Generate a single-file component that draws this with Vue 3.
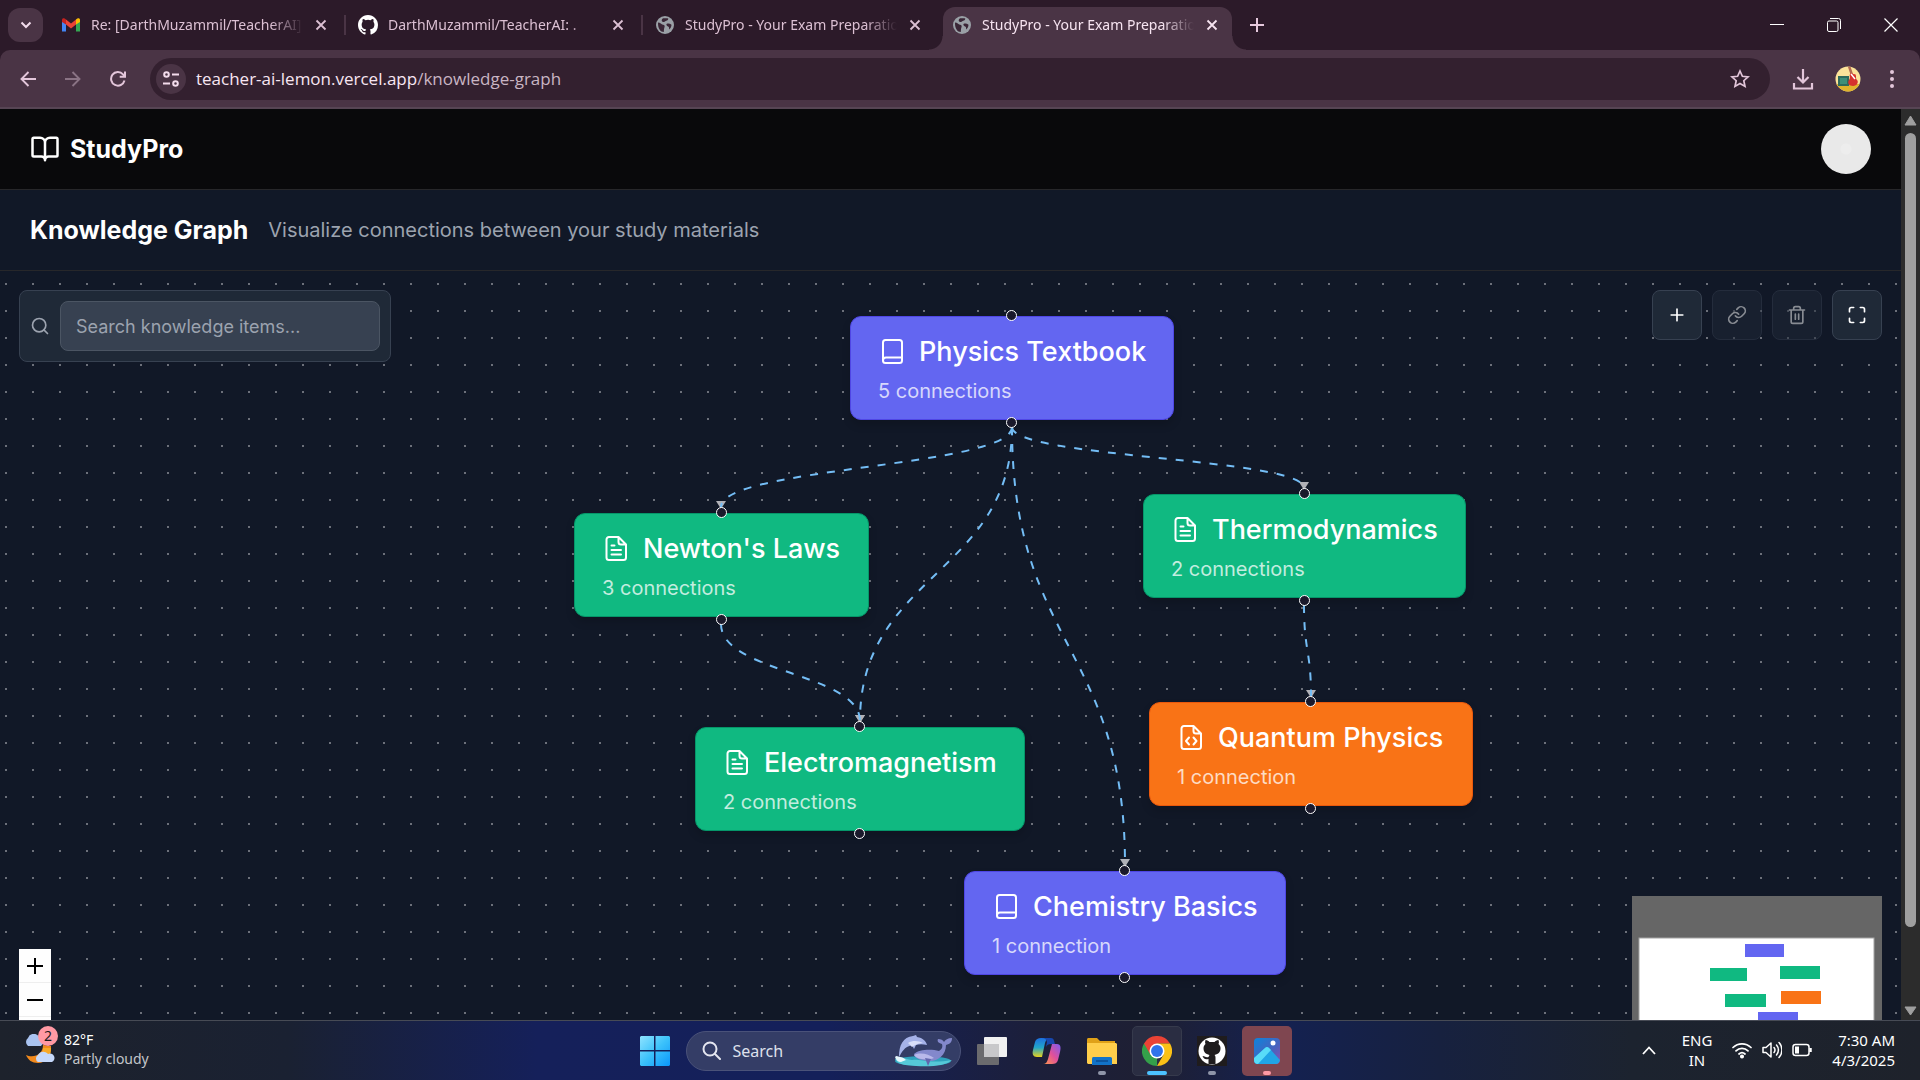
<script setup>
import { ref } from 'vue'

const query = ref('')

const tabs = [
  { title: 'Re: [DarthMuzammil/TeacherAI]', icon: 'gmail' },
  { title: 'DarthMuzammil/TeacherAI: .', icon: 'github' },
  { title: 'StudyPro - Your Exam Preparatio', icon: 'globe' },
  { title: 'StudyPro - Your Exam Preparatio', icon: 'globe', active: true },
]

const nodes = [
  { id: 'physics', title: 'Physics Textbook', count: '5 connections', icon: 'book', kind: 'subject', x: 850, y: 45, w: 324 },
  { id: 'newton', title: "Newton's Laws", count: '3 connections', icon: 'text', kind: 'topic', x: 574, y: 242, w: 295 },
  { id: 'thermo', title: 'Thermodynamics', count: '2 connections', icon: 'text', kind: 'topic', x: 1143, y: 223, w: 323 },
  { id: 'electro', title: 'Electromagnetism', count: '2 connections', icon: 'text', kind: 'topic', x: 695, y: 456, w: 330 },
  { id: 'quantum', title: 'Quantum Physics', count: '1 connection', icon: 'code', kind: 'note', x: 1149, y: 431, w: 324 },
  { id: 'chem', title: 'Chemistry Basics', count: '1 connection', icon: 'book', kind: 'subject', x: 964, y: 600, w: 322 },
]

const links = [
  ['physics', 'newton'],
  ['physics', 'thermo'],
  ['physics', 'electro'],
  ['physics', 'chem'],
  ['newton', 'electro'],
  ['thermo', 'quantum'],
]

const NODE_H = 104
const find = (id) => nodes.find((n) => n.id === id)
const edges = links.map(([a, b]) => {
  const s = find(a)
  const t = find(b)
  const sx = Math.floor(s.x + s.w / 2)
  const sy = s.y + NODE_H + 7
  const tx = Math.floor(t.x + t.w / 2)
  const ty = t.y - 6
  const my = Math.round((sy + ty) / 2)
  return {
    id: a + '-' + b,
    d: `M${sx},${sy} C${sx},${my} ${tx},${my} ${tx},${ty}`,
    arrow: `${tx - 5},${ty - 6} ${tx + 5},${ty - 6} ${tx},${ty + 2}`,
  }
})

const miniNodes = [
  { x: 113, y: 48, w: 39, kind: 'subject' },
  { x: 78, y: 72, w: 37, kind: 'topic' },
  { x: 148, y: 70, w: 40, kind: 'topic' },
  { x: 93, y: 98, w: 41, kind: 'topic' },
  { x: 149, y: 95, w: 40, kind: 'note' },
  { x: 126, y: 116, w: 40, kind: 'subject' },
]
const fills = { subject: '#6366f1', topic: '#10b981', note: '#f97316' }
</script>

<template>
  <div class="screen">
    <header class="browser">
      <div class="tabstrip">
        <button class="tab-search" aria-label="Search tabs">
          <svg width="12" height="8" viewBox="0 0 12 8"><path d="M1.500 1.500 6 6l4.500-4.500" fill="none" stroke="#f3dcec" stroke-width="2" /></svg>
        </button>
        <div class="tabs">
          <div v-for="(tab, i) in tabs" :key="i" class="tab" :class="{ active: tab.active, ruled: i < 2 }">
            <svg v-if="tab.icon === 'gmail'" width="20" height="20" viewBox="0 0 20 20">
              <path d="M1 5v11.500h4V9z" fill="#4285f4" />
              <path d="M19 5v11.500h-4V9z" fill="#34a853" />
              <path d="M15 4.500V9.500L19 7V5c0-2-2.200-2.500-4-.5z" fill="#fbbc04" />
              <path d="M5 4.500V9.500L1 7V5c0-2 2.200-2.500 4-.5z" fill="#c5221f" />
              <path d="M5 4.500 10 8.500l5-4v5l-5 4-5-4z" fill="#ea4335" />
            </svg>
            <svg v-else-if="tab.icon === 'github'" width="20" height="20" viewBox="0 0 16 16"><path fill="#fff" d="M8 0C3.580 0 0 3.580 0 8c0 3.540 2.290 6.530 5.470 7.590.4.070.55-.17.55-.38 0-.19-.01-.82-.01-1.490-2.010.37-2.530-.49-2.690-.94-.09-.23-.48-.94-.82-1.130-.28-.15-.68-.52-.01-.53.63-.01 1.080.58 1.230.82.720 1.210 1.870.87 2.330.66.070-.52.280-.87.510-1.070-1.780-.2-3.640-.89-3.640-3.950 0-.87.310-1.590.820-2.150-.08-.2-.36-1.020.08-2.120 0 0 .67-.21 2.200.82a7.600 7.600 0 0 1 4 0c1.530-1.040 2.200-.82 2.200-.82.440 1.100.160 1.920.080 2.120.510.560.820 1.270.820 2.150 0 3.070-1.870 3.750-3.650 3.950.290.250.540.730.540 1.480 0 1.070-.01 1.930-.01 2.200 0 .21.150.460.550.380A8 8 0 0 0 16 8c0-4.420-3.580-8-8-8z" /></svg>
            <svg v-else width="20" height="20" viewBox="0 0 20 20">
              <circle cx="10" cy="10" r="9" fill="#9aa0a6" />
              <path d="M3 7.500c2.500 0 3.200 2 5 2.300s2 1.200 1.400 2.700-.4 3-.6 4.600C5.500 16.800 2.800 14 3 7.500zM8 3.200c2 .3 3.500-.4 5.300.3-.2 1.700-1 2-2.400 2.400S9 7.500 7.500 6.700 6.800 4.200 8 3.200zM11.500 9c1.800-.8 3.500-.4 5 .8-.1 2-1 3.500-2.200 4.600-.5-1.400.2-2.400-1.200-3s-2-1.500-1.600-2.400z" fill="#3a2636" />
            </svg>
            <span class="tab-title">{{ tab.title }}</span>
            <button class="tab-close" aria-label="Close tab">
              <svg width="12" height="12" viewBox="0 0 12 12"><path d="m1.500 1.500 9 9m0-9-9 9" stroke="currentColor" stroke-width="1.800" /></svg>
            </button>
          </div>
        </div>
        <button class="bare new-tab" aria-label="New tab">
          <svg width="14" height="14" viewBox="0 0 14 14"><path d="M7 0v14M0 7h14" stroke="#e6c9dd" stroke-width="2" /></svg>
        </button>
        <div class="window-controls">
          <button class="bare" aria-label="Minimize"><svg width="14" height="14" viewBox="0 0 14 14"><path d="M0 6.500h14" stroke="#fff" /></svg></button>
          <button class="bare" aria-label="Restore"><svg width="14" height="14" viewBox="0 0 14 14" fill="none" stroke="#fff"><rect x=".5" y="3" width="10.500" height="10.500" rx="1.500" /><path d="M3 .5h8.500a2 2 0 0 1 2 2V11" /></svg></button>
          <button class="bare" aria-label="Close"><svg width="14" height="14" viewBox="0 0 14 14"><path d="m.5.5 13 13m0-13-13 13" stroke="#fff" stroke-width="1.200" /></svg></button>
        </div>
      </div>

      <div class="toolbar">
        <button class="bare" aria-label="Back"><svg width="16" height="16" viewBox="0 0 16 16" fill="none" stroke="#e3c6da" stroke-width="1.900"><path d="M16 8H1.500M8.500 1 1.500 8l7 7" /></svg></button>
        <button class="bare" aria-label="Forward"><svg width="16" height="16" viewBox="0 0 16 16" fill="none" stroke="#8a7384" stroke-width="1.900"><path d="M0 8h14.500M7.500 1l7 7-7 7" /></svg></button>
        <button class="bare" aria-label="Reload"><svg width="16" height="16" viewBox="0 0 16 16" fill="none" stroke="#e3c6da" stroke-width="2"><path d="M14.500 9.500A6.800 6.800 0 1 1 13 3.300L15 5.500M15 .5v5.300H9.700" /></svg></button>
        <div class="omnibox">
          <button class="site-info" aria-label="Site information">
            <svg width="18" height="18" viewBox="0 0 18 18" fill="none" stroke="#f3dcec" stroke-width="2"><circle cx="4.500" cy="4.500" r="2.300" /><path d="M10 4.500h7M1 13.500h7" /><circle cx="13.500" cy="13.500" r="2.300" /></svg>
          </button>
          <span class="url">teacher-ai-lemon.vercel.app<span class="path">/knowledge-graph</span></span>
          <button class="bare" aria-label="Bookmark">
            <svg width="20" height="20" viewBox="0 0 20 20"><path d="m10 2 2.400 5.300 5.700.6-4.300 3.800 1.200 5.700-5-2.900-5 2.900 1.200-5.700L1.900 7.900l5.700-.6z" fill="none" stroke="#e3c6da" stroke-width="1.700" /></svg>
          </button>
        </div>
        <button class="bare tool" aria-label="Downloads">
          <svg width="22" height="22" viewBox="0 0 22 22" fill="none" stroke="#e3c6da" stroke-width="2.200"><path d="M11 1v13M5.500 9l5.500 5.500L16.500 9M2 15v5.500h18V15" /></svg>
        </button>
        <button class="bare tool" aria-label="Profile">
          <svg width="26" height="26" viewBox="0 0 26 26">
            <defs><clipPath id="pf"><circle cx="13" cy="13" r="12.500" /></clipPath></defs>
            <g clip-path="url(#pf)">
              <rect width="26" height="26" fill="#fbe39a" /><rect y="18" width="26" height="8" fill="#e0b32c" />
              <rect x="3" y="10" width="11" height="10" fill="#2f6b5c" /><rect x="5" y="12" width="7" height="6" fill="#3f8f78" />
              <path d="M14 0l3 9" stroke="#b2694f" stroke-width="2.500" />
              <path d="M15 8c2-2 3 1 5 0 2 2 0 4 2 6s0 6-4 6-6-3-4-6 0-4 1-6z" fill="#d5322d" /><path d="m16 8 4 5" stroke="#fff" stroke-width="1.500" />
            </g>
          </svg>
        </button>
        <button class="bare tool menu" aria-label="Menu">
          <svg width="6" height="18" viewBox="0 0 6 18" fill="#e3c6da"><circle cx="3" cy="2" r="2" /><circle cx="3" cy="9" r="2" /><circle cx="3" cy="16" r="2" /></svg>
        </button>
      </div>
    </header>

    <div class="viewport">
      <main class="page">
        <header class="site-header">
          <a class="brand" href="#">
            <svg width="30" height="30" viewBox="0 0 24 24" fill="none" stroke="#fff" stroke-width="2" stroke-linecap="round" stroke-linejoin="round"><path d="M12 7v14M3 18a1 1 0 0 1-1-1V4a1 1 0 0 1 1-1h5a4 4 0 0 1 4 4 4 4 0 0 1 4-4h5a1 1 0 0 1 1 1v13a1 1 0 0 1-1 1h-6a3 3 0 0 0-3 3 3 3 0 0 0-3-3z" /></svg>
            <span>StudyPro</span>
          </a>
          <button class="avatar" aria-label="Account"></button>
        </header>

        <div class="title-bar">
          <h1>Knowledge Graph</h1>
          <p>Visualize connections between your study materials</p>
        </div>

        <section class="canvas">
          <svg class="edges" aria-hidden="true">
            <g v-for="e in edges" :key="e.id">
              <polygon :points="e.arrow" fill="#b1b1b7" />
              <path :d="e.d" />
            </g>
          </svg>

          <article
            v-for="n in nodes"
            :key="n.id"
            class="node"
            :class="n.kind"
            :style="{ left: n.x + 'px', top: n.y + 'px', width: n.w + 'px' }"
          >
            <i class="handle top"></i>
            <h2>
              <svg width="28" height="28" viewBox="0 0 28 28" fill="none" stroke="#fff" stroke-width="2" stroke-linecap="round" stroke-linejoin="round">
                <template v-if="n.icon === 'book'">
                  <rect x="5" y="2" width="19" height="23" rx="2.500" />
                  <path d="M5 22.500c0-2 1-3 3-3h16" />
                </template>
                <template v-else>
                  <path d="M16.500 2H7a2.500 2.500 0 0 0-2.500 2.500v18A2.500 2.500 0 0 0 7 25h14.500a2.500 2.500 0 0 0 2.500-2.500v-13zM16.500 2v5a2.500 2.500 0 0 0 2.500 2.500h5" />
                  <path v-if="n.icon === 'text'" d="M9.500 10.500h3M9.500 15h9.500M9.500 19.500h9.500" />
                  <path v-else d="m12 13.500-3 3.500 3 3.500M16.500 13.500l3 3.500-3 3.500" />
                </template>
              </svg>
              <span>{{ n.title }}</span>
            </h2>
            <p>{{ n.count }}</p>
            <i class="handle bottom"></i>
          </article>

          <form class="search" @submit.prevent>
            <label for="q" aria-label="Search">
              <svg width="20" height="20" viewBox="0 0 24 24" fill="none" stroke="#9ca3af" stroke-width="2" stroke-linecap="round"><circle cx="11" cy="11" r="8" /><path d="m21 21-4.300-4.300" /></svg>
            </label>
            <input id="q" v-model="query" type="text" placeholder="Search knowledge items..." />
          </form>

          <div class="actions">
            <button aria-label="Add item"><svg viewBox="0 0 24 24"><path d="M5 12h14M12 5v14" /></svg></button>
            <button disabled aria-label="Link items"><svg viewBox="0 0 24 24"><path d="M10 13a5 5 0 0 0 7.540.54l3-3a5 5 0 0 0-7.070-7.070l-1.720 1.710M14 11a5 5 0 0 0-7.540-.54l-3 3a5 5 0 0 0 7.070 7.070l1.710-1.710" /></svg></button>
            <button disabled aria-label="Delete item"><svg viewBox="0 0 24 24"><path d="M3 6h18M19 6v14c0 1-1 2-2 2H7c-1 0-2-1-2-2V6M8 6V4c0-1 1-2 2-2h4c1 0 2 1 2 2v2M10 11v6M14 11v6" /></svg></button>
            <button aria-label="Fullscreen"><svg viewBox="0 0 24 24"><path d="M8 3H5a2 2 0 0 0-2 2v3M21 8V5a2 2 0 0 0-2-2h-3M3 16v3a2 2 0 0 0 2 2h3M16 21h3a2 2 0 0 0 2-2v-3" /></svg></button>
          </div>

          <div class="zoom">
            <button aria-label="Zoom in"><svg width="16" height="16" viewBox="0 0 16 16"><path d="M8 0v16M0 8h16" stroke="#000" stroke-width="2" /></svg></button>
            <button aria-label="Zoom out"><svg width="16" height="16" viewBox="0 0 16 16"><path d="M0 8h16" stroke="#000" stroke-width="2" /></svg></button>
            <button aria-label="Fit view"></button>
          </div>

          <svg class="minimap" width="250" height="188" viewBox="0 0 250 188" aria-hidden="true">
            <rect width="250" height="188" fill="#666" />
            <rect x="7" y="42" width="235" height="110" fill="#fff" stroke="#a3a3a3" />
            <rect v-for="(m, i) in miniNodes" :key="i" :x="m.x" :y="m.y" :width="m.w" height="13" :fill="fills[m.kind]" />
          </svg>
        </section>
      </main>

      <div class="scrollbar" aria-hidden="true">
        <svg width="13" height="11" viewBox="0 0 13 11"><path d="M6.500 1 12 10H1z" fill="#9f9f9f" stroke="#9f9f9f" stroke-linejoin="round" /></svg>
        <div class="thumb"></div>
        <svg width="13" height="10" viewBox="0 0 13 10"><path d="M1 1h11L6.500 9z" fill="#9f9f9f" stroke="#9f9f9f" stroke-linejoin="round" /></svg>
      </div>
    </div>

    <footer class="taskbar">
      <button class="bare weather">
        <span class="weather-icon">
          <svg width="32" height="34" viewBox="0 0 32 34">
            <path d="M28 12c1 10-5 17-13 17-6 0-10-3-12-8 4 2 10 2 14-2 2-2 3-5 3-8z" fill="#f28a1d" />
            <path d="M20 14h8c0 4-1 7-3 10h-9c3-2 4-6 4-10z" fill="#f7a928" />
            <path d="M5 12a5 5 0 0 1 0-8 6 6 0 0 1 11-1 5 5 0 0 1 2 9z" fill="#a9c3f0" />
            <path d="M15 28a4 4 0 0 1 0-7 6 6 0 0 1 10-1 4 4 0 0 1 4 8z" fill="#c5d8fa" />
          </svg>
          <b>2</b>
        </span>
        <span class="weather-text">82°F<small>Partly cloudy</small></span>
      </button>

      <nav class="apps">
        <button class="app" aria-label="Start">
          <svg width="30" height="30" viewBox="0 0 30 30">
            <defs><linearGradient id="win" x1="0" y1="0" x2="1" y2="1"><stop offset="0" stop-color="#8fe3ff" /><stop offset=".5" stop-color="#3cc2fb" /><stop offset="1" stop-color="#0a96fa" /></linearGradient></defs>
            <path d="M1 0h13v14H0V1zM15.500 0H29l1 1v13H15.500zM0 15.500h14V30H1l-1-1zM15.500 15.500H30V29l-1 1H15.500z" fill="url(#win)" />
          </svg>
        </button>
        <button class="task-search">
          <svg width="19" height="19" viewBox="0 0 19 19" fill="none" stroke="#e4e6f0" stroke-width="2" stroke-linecap="round"><circle cx="8" cy="8" r="6.500" /><path d="m13 13 5 5" /></svg>
          <span>Search</span>
          <svg width="60" height="32" viewBox="0 0 60 32">
            <ellipse cx="29" cy="26" rx="28" ry="5" fill="#2fa3bd" /><path d="M1 24c8-4 12 2 18 1s18 4 39 0c-6 6-22 7-36 6S4 29 1 24z" fill="#56c9d8" />
            <path d="M5 22C5 10 9 2 19 1l3-1 1 2c6 1 9 4 10 8-4-1-8-1-11 0l-2 4-2-4C10 12 8 17 5 22z" fill="#a5b2e8" /><path d="M14 8c5-3 11-2 15 0-6 0-9 3-11 4z" fill="#d8def8" />
            <path d="M20 19c5-5 18-5 25-3 3-2 4-4 3-7-4-1-5-3-4-5 3 0 5 1 6 3 1-2 4-4 8-4 0 4-2 6-6 7 0 10-8 16-16 16-7 0-15-2-16-7z" fill="#8388cc" /><path d="M20 20c6-3 15-1 20 3-8 3-18 1-20-3z" fill="#b9b8ea" /><path d="M31 23l3 8 3-7z" fill="#6266ad" />
            <path d="M1 22c2-2 3 0 5 0s4 1 6 3l-5 2c-3 0-5-2-6-5z" fill="#e8f8fc" />
          </svg>
        </button>
        <button class="app" aria-label="Task view">
          <svg width="30" height="28" viewBox="0 0 30 28"><rect y="7" width="22" height="21" rx="1" fill="#6b6b6e" /><rect x="7" width="23" height="20" rx="1" fill="#f1f1f1" /><rect x="7" y="7" width="15" height="13" fill="#c8c8ca" /></svg>
        </button>
        <button class="app" aria-label="Copilot">
          <svg width="30" height="28" viewBox="0 0 30 28">
            <defs>
              <linearGradient id="c1" x1="0" y1="0" x2="0" y2="1"><stop offset="0" stop-color="#1c6fe0" /><stop offset=".5" stop-color="#22a6c9" /><stop offset="1" stop-color="#e8d21c" /></linearGradient>
              <linearGradient id="c2" x1="1" y1="0" x2="0" y2="1"><stop offset="0" stop-color="#7c5cf0" /><stop offset=".5" stop-color="#e0509a" /><stop offset="1" stop-color="#ff9a4a" /></linearGradient>
            </defs>
            <path d="M20 7h5c4 0 4 4 3 8l-2 8c-1 3-3 4-6 4h-9c3 0 4-2 5-5z" fill="url(#c2)" />
            <path d="M10 20H5c-4 0-5-3-4-7l2-8c1-3 3-4 6-4h9c-3 0-4 2-5 5z" fill="url(#c1)" />
            <path d="M10 1h9c3 0 3 3 4 6h-4c-3 0-4 1-5 3l1-5c-1-3-2-4-5-4z" fill="#1747ae" />
          </svg>
        </button>
        <button class="app running" aria-label="File Explorer">
          <svg width="30" height="28" viewBox="0 0 30 28"><path d="M0 3c0-2 1-2 2-2h8l3 3h15v6H0z" fill="#e0a118" /><path d="M0 6h29l1 1v20H1l-1-1z" fill="#ffce4b" /><path d="M5 28v-6c0-2 1-2 2-2h16c2 0 2 1 2 2v6z" fill="#1273c8" /><path d="M9 24h12" stroke="#0b4c93" stroke-width="1.500" /></svg>
        </button>
        <button class="app running current" aria-label="Chrome">
          <svg width="30" height="30" viewBox="0 0 48 48">
            <path d="M24 24 24 48A24 24 0 0 1 3.200 12z" fill="#34a04a" />
            <path d="M24 12h20.800A24 24 0 0 0 3.200 12l10.400 18z" fill="#ea4335" /><path d="M34.400 30 24 48A24 24 0 0 0 44.800 12H24z" fill="#fbc116" />
            <circle cx="24" cy="24" r="12" fill="#fff" /><circle cx="24" cy="24" r="9.500" fill="#2f73ea" />
          </svg>
        </button>
        <button class="app running" aria-label="GitHub Desktop">
          <svg width="30" height="30" viewBox="0 0 30 30"><rect width="30" height="30" fill="#1f1c1d" /><circle cx="15" cy="15" r="13.500" fill="#fff" /><path d="M11.500 28v-5c-4 1-5-1-6-3 3 0 3 2 6 1l1-2c-4-1-6-3-6-7 0-2 1-3 2-4-1-2 0-3 0-4 2 0 3 1 4 2h5c1-1 2-2 4-2 0 1 1 2 0 4 1 1 2 2 2 4 0 4-2 6-6 7 1 1 1 2 1 3v6z" fill="#1f1c1d" /></svg>
        </button>
        <button class="app running alert" aria-label="Photos">
          <svg width="26" height="26" viewBox="0 0 26 26">
            <defs><linearGradient id="ph" x1="0" y1="0" x2="1" y2="1"><stop offset="0" stop-color="#0d84dc" /><stop offset=".6" stop-color="#4a62bd" /><stop offset="1" stop-color="#8f4db0" /></linearGradient></defs>
            <rect width="26" height="26" rx="4" fill="url(#ph)" /><path d="M0 20 11 10q2-2 4 0l11 12q-1 4-4 4H4q-4 0-4-4z" fill="#20a5e6" /><path d="M0 20 11 10q2-2 4 0l2 2L4 26q-4 0-4-4z" fill="#58dcf8" /><circle cx="19" cy="5" r="2.500" fill="#fff" />
          </svg>
        </button>
      </nav>

      <div class="tray">
        <button class="bare" aria-label="Hidden icons"><svg width="14" height="9" viewBox="0 0 14 9"><path d="m1 8 6-6.500L13 8" fill="none" stroke="#fff" stroke-width="1.800" /></svg></button>
        <button class="bare lang">ENG<br />IN</button>
        <button class="bare status" aria-label="Network, volume, battery">
          <svg width="20" height="18" viewBox="0 0 20 18" fill="none" stroke="#fff" stroke-width="1.700" stroke-linecap="round"><path d="M1 6.500a13 13 0 0 1 18 0M4 9.800a8.500 8.500 0 0 1 12 0M7 13a4.500 4.500 0 0 1 6 0" /><circle cx="10" cy="15.500" r="1.200" fill="#fff" /></svg>
          <svg width="20" height="18" viewBox="0 0 20 18" fill="none" stroke="#fff" stroke-width="1.500" stroke-linecap="round" stroke-linejoin="round"><path d="M1 6.500h3l5-4.500v14l-5-4.500H1zM12 6.500a4 4 0 0 1 0 5M14.500 4a7.500 7.500 0 0 1 0 10M17 1.500a11 11 0 0 1 0 15" /></svg>
          <svg width="20" height="18" viewBox="0 0 20 18" fill="none" stroke="#fff" stroke-width="1.500"><rect x="1" y="3.500" width="16" height="11" rx="2.500" /><path d="M3 5.500h4v7H3z" fill="#fff" stroke="none" /><path d="M18.500 7v4" stroke-width="2.500" /></svg>
        </button>
        <button class="bare clock">7:30 AM<br />4/3/2025</button>
      </div>
    </footer>
  </div>
</template>

<style>
body {
  background: #111827;
  overflow: hidden;
}
</style>

<style scoped>
* {
  box-sizing: border-box;
}
.screen {
  display: flex;
  flex-direction: column;
  height: 100vh;
  font-family: Inter, "Liberation Sans", sans-serif;
  color: #fff;
}
button {
  font-family: inherit;
  color: inherit;
  padding: 0;
  border: 0;
}
svg {
  display: block;
  flex: none;
}
.bare {
  background: none;
  display: flex;
  align-items: center;
  justify-content: center;
}

/* browser frame */
.browser {
  flex: none;
  background: #2c1a29;
  font-family: "Noto Sans", sans-serif;
}
.tabstrip {
  display: flex;
  align-items: center;
  height: 50px;
  padding-left: 8px;
}
.tab-search {
  width: 35px;
  height: 34px;
  border-radius: 12px;
  background: #4a3445;
  display: flex;
  align-items: center;
  justify-content: center;
}
.tabs {
  display: flex;
  align-self: stretch;
  gap: 8px;
  margin-left: 9px;
  padding-top: 7px;
}
.tab {
  position: relative;
  display: flex;
  align-items: center;
  width: 289px;
  height: 43px;
  padding: 0 14px 7px 9px;
  font-size: 14px;
  color: #dcc0d3;
}
.tab.ruled::after {
  content: "";
  position: absolute;
  right: -5px;
  top: 8px;
  width: 2px;
  height: 20px;
  background: #4a3445;
}
.tab.active {
  background: #4a3445;
  border-radius: 12px 12px 0 0;
  color: #f7e4f1;
}
.tab.active::before,
.tab.active::after {
  content: "";
  position: absolute;
  bottom: 0;
  width: 14px;
  height: 14px;
}
.tab.active::before {
  left: -14px;
  background: radial-gradient(circle at 0 0, transparent 13px, #4a3445 14px);
}
.tab.active::after {
  right: -14px;
  background: radial-gradient(circle at 100% 0, transparent 13px, #4a3445 14px);
}
.tab-title {
  flex: 1;
  margin: 0 4px 0 10px;
  white-space: nowrap;
  line-height: 20px;
  mask-image: linear-gradient(90deg, #000 180px, transparent 212px);
}
.tab-close {
  background: none;
}
.new-tab {
  width: 30px;
  margin-left: 10px;
}
.window-controls {
  display: flex;
  margin-left: auto;
  padding-right: 1px;
}
.window-controls .bare {
  width: 57px;
  height: 50px;
}
.toolbar {
  display: flex;
  align-items: center;
  height: 59px;
  padding: 0 6px 0 5px;
  background: #4a3445;
  border-bottom: 2px solid #574554;
  border-radius: 10px 10px 0 0;
}
.toolbar > .bare {
  width: 45px;
  height: 40px;
}
.omnibox {
  display: flex;
  align-items: center;
  flex: 1;
  height: 42px;
  margin: 0 10px;
  padding: 0 20px 0 6px;
  border-radius: 21px;
  background: #33202f;
}
.site-info {
  width: 30px;
  height: 30px;
  border-radius: 50%;
  background: #4a3445;
  display: flex;
  align-items: center;
  justify-content: center;
}
.url {
  flex: 1;
  margin-left: 10px;
  font-family: "Open Sans", "Noto Sans", sans-serif;
  font-size: 17px;
  line-height: 24px;
  color: #f8e6f2;
}
.path {
  color: #c9b5c3;
}
.toolbar > .menu {
  width: 44px;
}

/* page */
.viewport {
  flex: 1;
  min-height: 0;
  display: flex;
}
.page {
  flex: 1;
  min-width: 0;
  display: flex;
  flex-direction: column;
}
.site-header {
  flex: none;
  display: flex;
  align-items: center;
  justify-content: space-between;
  height: 81px;
  padding: 0 30px;
  background: #09090b;
  border-bottom: 1px solid #27272a;
}
.brand {
  display: flex;
  align-items: center;
  gap: 10px;
  font-size: 25px;
  font-weight: 700;
  color: #fff;
  text-decoration: none;
}
.avatar {
  width: 50px;
  height: 50px;
  border-radius: 50%;
  background: radial-gradient(circle, #ededed 5px, #e9e9e9 6px);
}
.title-bar {
  flex: none;
  display: flex;
  align-items: center;
  gap: 20px;
  height: 81px;
  padding: 0 30px;
  background: #111827;
  border-bottom: 1px solid #27272a;
}
.title-bar h1 {
  margin: 0;
  font-size: 25px;
  font-weight: 700;
}
.title-bar p {
  margin: 0;
  font-size: 20px;
  color: #9ca3af;
}
.canvas {
  position: relative;
  flex: 1;
  overflow: hidden;
  background-color: #111827;
  background-image: radial-gradient(circle at 6px 13px, #6c707a 1px, transparent 1px);
  background-size: 27px 27px;
}
.edges {
  position: absolute;
  inset: 0;
  width: 100%;
  height: 100%;
}
.edges path {
  fill: none;
  stroke: #74bdf5;
  stroke-width: 2;
  stroke-dasharray: 8 9;
}
.node {
  position: absolute;
  height: 104px;
  padding: 18px 27px;
  border: 1px solid;
  border-radius: 11px;
  box-shadow: 0 5px 8px rgba(0, 0, 0, 0.15);
}
.subject {
  background: #6366f1;
  border-color: #4f46e5;
}
.topic {
  background: #10b981;
  border-color: #059669;
}
.note {
  background: #f97316;
  border-color: #ea580c;
}
.node h2 {
  display: flex;
  align-items: center;
  gap: 13px;
  margin: 0;
  font-size: 27px;
  font-weight: 500;
  line-height: 34px;
  white-space: nowrap;
}
.node p {
  margin: 8px 0 0;
  font-size: 20px;
  line-height: 28px;
  color: rgba(255, 255, 255, 0.75);
}
.handle {
  position: absolute;
  left: 50%;
  width: 11px;
  height: 11px;
  margin-left: -6px;
  border: 1px solid #fff;
  border-radius: 50%;
  background: #1a192b;
}
.handle.top {
  top: -7px;
}
.handle.bottom {
  bottom: -9px;
}
.search {
  position: absolute;
  left: 19px;
  top: 19px;
  display: flex;
  align-items: center;
  gap: 10px;
  padding: 10px;
  border: 1px solid #374151;
  border-radius: 8px;
  background: #1f2937;
}
.search input {
  width: 320px;
  height: 50px;
  padding: 0 15px;
  border: 1px solid #4b5563;
  border-radius: 8px;
  background: #374151;
  font-family: inherit;
  font-size: 18px;
  color: #fff;
}
.search input::placeholder {
  color: #9ca3af;
}
.actions {
  position: absolute;
  top: 19px;
  right: 19px;
  display: flex;
  gap: 10px;
}
.actions button {
  display: flex;
  align-items: center;
  justify-content: center;
  width: 50px;
  height: 50px;
  border: 1px solid #374151;
  border-radius: 8px;
  background: #1f2937;
}
.actions button:disabled {
  opacity: 0.5;
}
.actions svg {
  width: 20px;
  height: 20px;
  fill: none;
  stroke: #fff;
  stroke-width: 2;
  stroke-linecap: round;
  stroke-linejoin: round;
}
.zoom {
  position: absolute;
  left: 19px;
  top: 678px;
  width: 32px;
}
.zoom button {
  display: flex;
  align-items: center;
  justify-content: center;
  width: 32px;
  height: 34px;
  background: #fefefe;
  border-bottom: 1px solid #eee;
}
.minimap {
  position: absolute;
  right: 19px;
  top: 625px;
}
.scrollbar {
  flex: none;
  display: flex;
  flex-direction: column;
  align-items: center;
  gap: 7px;
  width: 19px;
  padding: 6px 0 4px;
  background: #2c2c2c;
}
.thumb {
  flex: 1;
  width: 11px;
  margin-bottom: 72px;
  border-radius: 6px;
  background: #9f9f9f;
}

/* taskbar */
.taskbar {
  flex: none;
  display: flex;
  align-items: center;
  justify-content: space-between;
  height: 60px;
  border-top: 1px solid #474b55;
  background: linear-gradient(90deg, #1d222c 0, #1a2132 15%, #15205a 28%, #14205a 43%, #1c1f3a 54%, #1e1f33 60%, #142150 67%, #17213f 75%, #1c232f 85%, #1e222b 100%);
  font-family: "Noto Sans", sans-serif;
  font-size: 14px;
  line-height: 20px;
}
.weather {
  flex: 1 1 0;
  justify-content: flex-start;
  gap: 9px;
  padding: 0 0 3px 23px;
  font-size: 14px;
}
.weather-icon {
  position: relative;
  padding-top: 4px;
}
.weather-icon b {
  position: absolute;
  left: 15px;
  top: -4px;
  width: 20px;
  height: 20px;
  border-radius: 50%;
  background: #ff99a4;
  color: #1b1b1b;
  font-weight: 400;
  line-height: 20px;
  text-align: center;
}
.weather-text {
  text-align: left;
}
.weather-text small {
  display: block;
  font-size: 14px;
  color: #c3c5c9;
}
.apps {
  display: flex;
  align-items: center;
  gap: 5px;
  padding-left: 3px;
}
.app {
  position: relative;
  display: flex;
  align-items: center;
  justify-content: center;
  width: 50px;
  height: 50px;
  border-radius: 5px;
  background: none;
}
.app.running::after {
  content: "";
  position: absolute;
  bottom: 1px;
  width: 8px;
  height: 4px;
  border-radius: 2px;
  background: #8f95a8;
}
.app.current {
  border: 1px solid #363a4c;
  background: #2a2d42;
}
.app.current::after {
  width: 20px;
  bottom: 0;
  background: #4cc2ff;
}
.app.alert {
  background: #7f4650;
}
.app.alert::after {
  background: #ff99a4;
}
.task-search {
  display: flex;
  align-items: center;
  width: 275px;
  height: 40px;
  margin: 0 1px;
  padding: 0 6px 0 15px;
  border: 1px solid #4a5279;
  border-radius: 20px;
  background: #343d66;
  font-size: 16px;
  color: #dfe1ec;
}
.task-search span {
  flex: 1;
  margin-left: 12px;
  text-align: left;
}
.tray {
  flex: 1 1 0;
  display: flex;
  align-items: center;
  justify-content: flex-end;
  padding: 0 25px 1px 0;
}
.lang {
  margin: 0 20px 0 26px;
  font-size: 15px;
  line-height: 20px;
  text-align: center;
}
.status {
  gap: 10px;
  margin-right: 20px;
}
.clock {
  font-size: 15px;
  line-height: 20px;
  text-align: right;
}
</style>
